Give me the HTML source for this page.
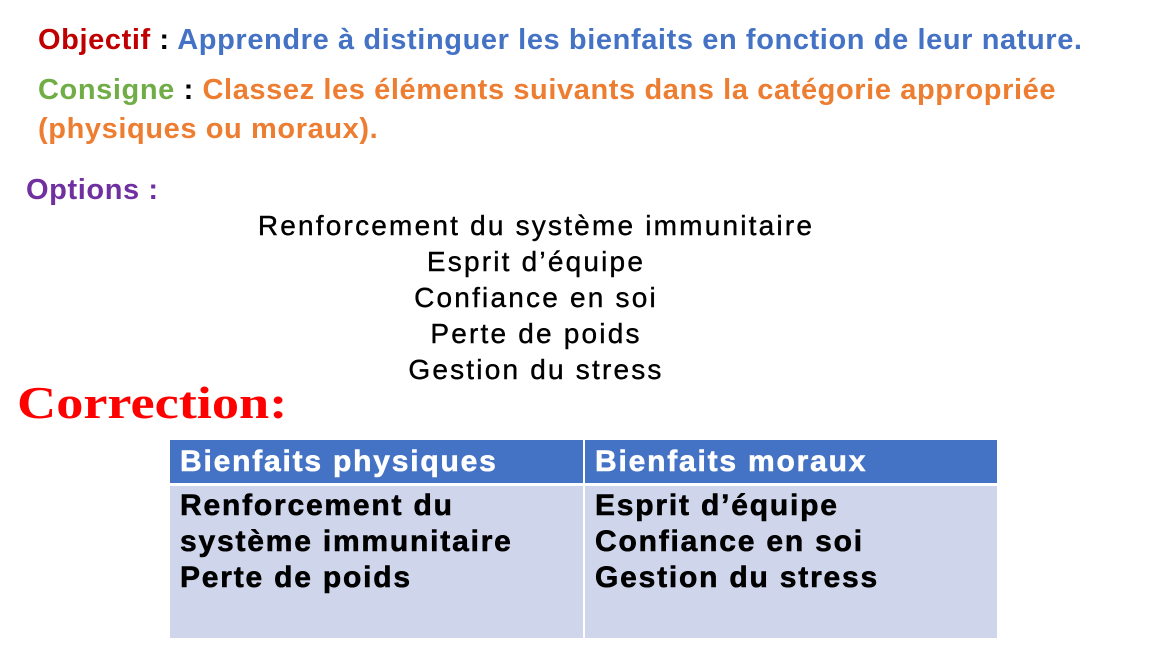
<!DOCTYPE html>
<html><head><meta charset="utf-8"><style>
body{margin:0;width:1166px;height:649px;background:#fff;position:relative;overflow:hidden;font-family:"Liberation Sans",Arial,sans-serif}
.a{position:absolute;white-space:nowrap;font-weight:bold;font-size:29px;letter-spacing:0.6px;line-height:30px}
.opt{position:absolute;left:186px;width:700px;text-align:center;font-size:28px;letter-spacing:2.2px;line-height:36px;top:208px;color:#000;-webkit-text-stroke:0.4px #000}
.cor{position:absolute;left:17px;top:378px;font-family:"Liberation Serif",serif;font-weight:bold;color:#f00;font-size:46px;line-height:50px;transform:scaleX(1.18);transform-origin:left}
table{position:absolute;left:170px;top:440px;border-collapse:collapse;width:827px}
td{padding:0 10px;font-weight:bold;font-size:30px;letter-spacing:1.8px;vertical-align:top;-webkit-text-stroke:0.6px currentColor}
.h td{background:#4472c4;color:#fff;height:43px;line-height:43px;border-bottom:3px solid #fff}
.b td{background:#cfd5ea;color:#000;height:150px;line-height:36px;padding-top:2px}
td+td{border-left:2px solid #fff}
</style></head><body>
<div class="a" style="left:38px;top:25px"><span style="color:#c00000">Objectif</span> : <span style="color:#4472c4">Apprendre à distinguer les bienfaits en fonction de leur nature.</span></div>
<div class="a" style="left:38px;top:75px"><span style="color:#70ad47">Consigne</span> : <span style="color:#ed7d31">Classez les éléments suivants dans la catégorie appropriée</span></div>
<div class="a" style="left:38px;top:114px;color:#ed7d31">(physiques ou moraux).</div>
<div class="a" style="left:26px;top:175px;color:#7030a0">Options :</div>
<div class="opt">Renforcement du système immunitaire<br>Esprit d’équipe<br>Confiance en soi<br>Perte de poids<br>Gestion du stress</div>
<div class="cor">Correction:</div>
<table>
<tr class="h"><td style="width:393px">Bienfaits physiques</td><td>Bienfaits moraux</td></tr>
<tr class="b"><td>Renforcement du<br>système immunitaire<br>Perte de poids</td><td>Esprit d’équipe<br>Confiance en soi<br>Gestion du stress</td></tr>
</table>
</body></html>
